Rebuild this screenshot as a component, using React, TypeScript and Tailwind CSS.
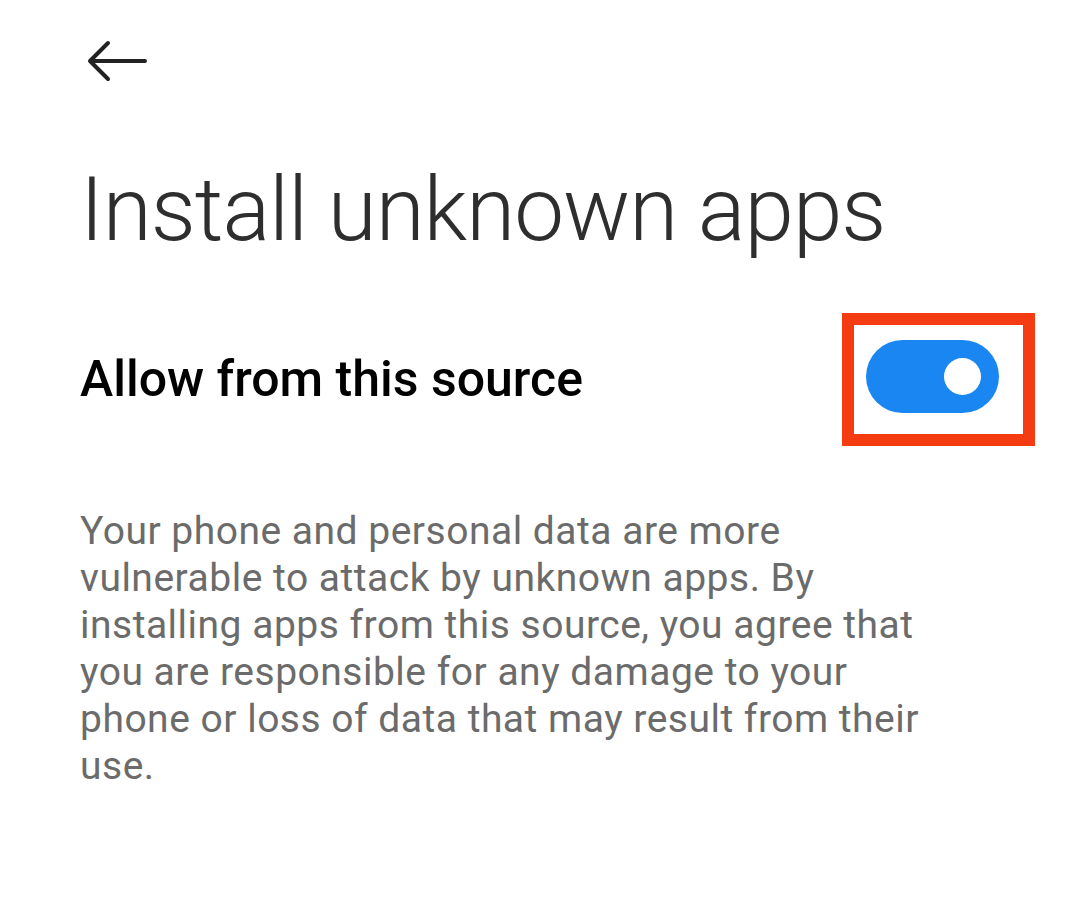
export default function App() {
  return (
    <div
      className="flex min-h-[908px] w-[1080px] flex-col bg-white pl-[80px] pr-[45px]"
      style={{ fontFamily: "Roboto, 'Noto Sans', sans-serif" }}
    >
      <div className="flex h-[122px] items-center">
        <button type="button" aria-label="Back" className="-mt-[1px] ml-[7px]">
          <svg width="60" height="42" viewBox="0 0 60 42" fill="none" stroke="#222" strokeWidth="4" strokeLinecap="round" strokeLinejoin="round">
            <path d="M58 21H3M21 3L3 21l18 18" />
          </svg>
        </button>
      </div>

      <h1 className="mt-[43px] text-[89px] font-light leading-none tracking-[-1px] text-[#2e2e2e]">
        Install unknown apps
      </h1>

      <div className="mt-[59px] flex items-center justify-between">
        <span className="text-[50px] font-medium text-black">Allow from this source</span>
        <div className="flex h-[133px] w-[193px] items-start border-[12px] border-[#f53b12] pl-[12px] pt-[15px]">
          <button
            type="button"
            aria-label="Allow from this source"
            className="relative h-[73px] w-[133px] rounded-full bg-[#1a86f2]"
          >
            <span className="absolute right-[18px] top-[18px] h-[37px] w-[37px] rounded-full bg-white" />
          </button>
        </div>
      </div>

      <p className="mt-[62px] max-w-[860px] text-[39px] leading-[47px] tracking-[0.5px] text-[#6b6b6b]">
        Your phone and personal data are more vulnerable to attack by unknown apps. By installing apps from this
        source, you agree that you are responsible for any damage to your phone or loss of data that may result from
        their use.
      </p>
    </div>
  );
}
